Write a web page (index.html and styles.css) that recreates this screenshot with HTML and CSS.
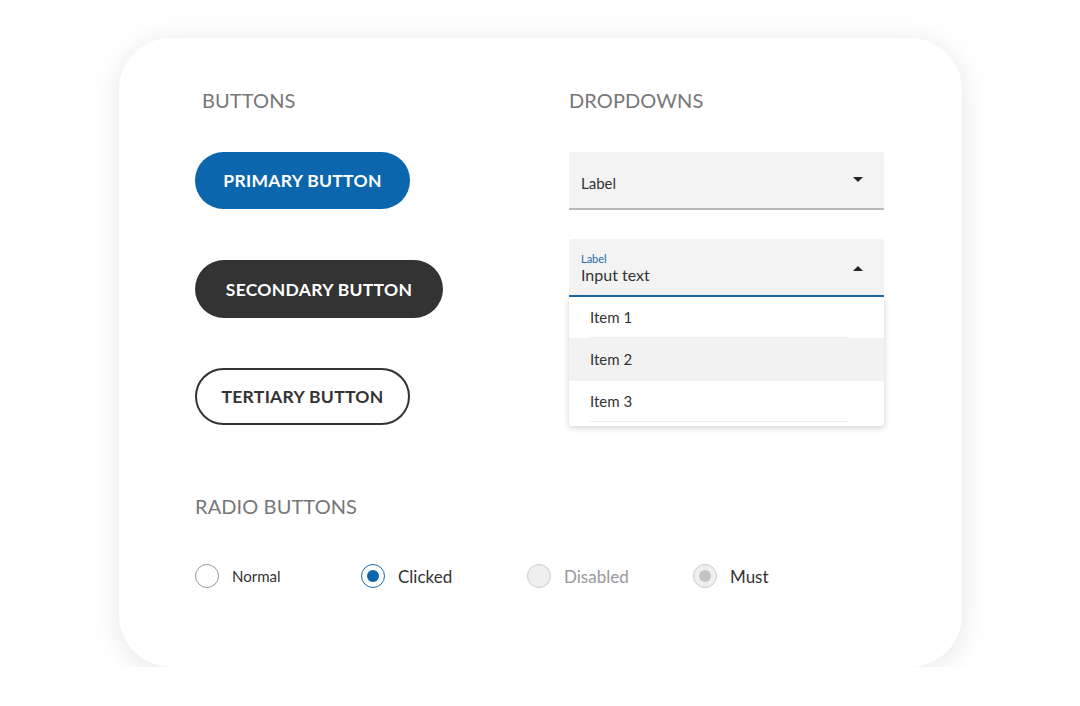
FILE: index.html
```html
<!DOCTYPE html>
<html>
<head>
    <meta charset="UTF-8">
    <title>UI Components</title>
    <link rel="stylesheet" href="styles.css">
</head>
<body>
    <div class="card">
        <div class="top-row">
            <div class="col col-buttons">
                <h2 class="section-title title-buttons">BUTTONS</h2>
                <button class="btn btn-primary">PRIMARY BUTTON</button>
                <button class="btn btn-secondary">SECONDARY BUTTON</button>
                <button class="btn btn-tertiary">TERTIARY BUTTON</button>
            </div>

            <div class="col col-dropdowns">
                <h2 class="section-title">DROPDOWNS</h2>

                <div class="select">
                    <span class="select-value">Label</span>
                    <span class="caret caret-down"></span>
                </div>

                <div class="select select-open">
                    <div class="select-text">
                        <span class="select-label">Label</span>
                        <span class="select-value">Input text</span>
                    </div>
                    <span class="caret caret-up"></span>
                </div>
                <ul class="menu">
                    <li class="menu-item">Item 1</li>
                    <li class="menu-item active">Item 2</li>
                    <li class="menu-item">Item 3</li>
                </ul>
            </div>
        </div>

        <h2 class="section-title title-radios">RADIO BUTTONS</h2>
        <div class="radio-row">
            <label class="radio radio-normal">
                <span class="radio-circle"></span>
                <span class="radio-text">Normal</span>
            </label>
            <label class="radio radio-checked">
                <span class="radio-circle"></span>
                <span class="radio-text">Clicked</span>
            </label>
            <label class="radio radio-disabled">
                <span class="radio-circle"></span>
                <span class="radio-text">Disabled</span>
            </label>
            <label class="radio radio-must">
                <span class="radio-circle"></span>
                <span class="radio-text">Must</span>
            </label>
        </div>
    </div>
</body>
</html>
```

FILE: styles.css
```css
body {
    margin: 0;
    background-color: #fff;
    font-family: Lato, "Open Sans", sans-serif;
    color: #333;
}
.card {
    width: 843px;
    height: 629px;
    box-sizing: border-box;
    margin: 38px 0 0 119px;
    padding: 50px 0 0 76px;
    background-color: #fff;
    border-radius: 52px;
    box-shadow: 0 4px 30px rgba(0,0,0,0.1);
}
.top-row {
    display: flex;
}
.col {
    display: flex;
    flex-direction: column;
    align-items: flex-start;
}
.col-buttons {
    width: 374px;
}
.col-dropdowns {
    width: 315px;
}
.section-title {
    margin: 0;
    font-size: 20px;
    line-height: 24px;
    font-weight: 400;
    color: #777;
    letter-spacing: 0.1px;
}
.title-buttons {
    padding-left: 7px;
}

/* buttons */
.btn {
    font-family: Lato, sans-serif;
    font-size: 17.5px;
    font-weight: 700;
    letter-spacing: 0.3px;
    height: 57px;
    border-radius: 29px;
    border: none;
    padding: 0;
    box-sizing: border-box;
    cursor: pointer;
}
.btn-primary {
    margin-top: 40px;
    width: 215px;
    background-color: #0b66ad;
    color: #fff;
}
.btn-secondary {
    margin-top: 51px;
    width: 248px;
    height: 58px;
    background-color: #333;
    color: #fff;
}
.btn-tertiary {
    margin-top: 50px;
    width: 215px;
    background-color: #fff;
    color: #333;
    border: 2px solid #333;
}

/* dropdowns */
.select {
    width: 315px;
    height: 58px;
    box-sizing: border-box;
    background-color: #f3f3f3;
    border-radius: 3px 3px 0 0;
    border-bottom: 2px solid #b9b9b9;
    display: flex;
    align-items: center;
    justify-content: space-between;
    padding: 6px 21px 0 12px;
    margin-top: 40px;
}
.select-value {
    font-size: 15px;
    color: #333;
}
.select-open {
    margin-top: 29px;
    border-bottom-color: #1b6aab;
    padding-top: 0;
}
.select-text {
    display: flex;
    flex-direction: column;
    padding-top: 2px;
}
.select-label {
    font-size: 11px;
    line-height: 13px;
    color: #1b6aab;
}
.select-open .select-value {
    font-size: 16px;
    line-height: 20px;
}
.caret {
    width: 0;
    height: 0;
    border-left: 5px solid transparent;
    border-right: 5px solid transparent;
}
.caret-down {
    border-top: 5px solid #222;
    margin-top: -8px;
}
.caret-up {
    border-bottom: 5px solid #222;
    margin-top: 2px;
}
.menu {
    list-style: none;
    margin: 0;
    padding: 0 0 4px;
    width: 315px;
    background-color: #fff;
    border-radius: 0 0 3px 3px;
    box-shadow: 0 2px 6px rgba(0,0,0,0.18);
}
.menu-item {
    height: 41px;
    line-height: 41px;
    padding-left: 21px;
    font-size: 15px;
    color: #333;
    position: relative;
}
.menu-item.active {
    height: 43px;
    line-height: 43px;
    background-color: #f2f2f2;
}
.menu-item:first-child::after,
.menu-item:last-child::after {
    content: "";
    position: absolute;
    left: 21px;
    right: 36px;
    bottom: 0;
    border-bottom: 1px solid #eee;
}

/* radios */
.title-radios {
    margin-top: 68px;
}
.radio-row {
    display: flex;
    margin-top: 46px;
}
.radio {
    width: 166px;
    display: flex;
    align-items: center;
    gap: 13px;
}
.radio-circle {
    width: 24px;
    height: 24px;
    box-sizing: border-box;
    border-radius: 50%;
    border: 1px solid #999;
    background-color: #fff;
    position: relative;
}
.radio-text {
    font-size: 17px;
    color: #333;
}
.radio-normal .radio-text {
    font-size: 15px;
}
.radio-checked .radio-circle {
    border-color: #1b6aab;
}
.radio-checked .radio-circle::after,
.radio-must .radio-circle::after {
    content: "";
    position: absolute;
    left: 5px;
    top: 5px;
    width: 12px;
    height: 12px;
    border-radius: 50%;
    background-color: #0b66ad;
}
.radio-disabled .radio-circle,
.radio-must .radio-circle {
    background-color: #efefef;
    border-color: #ccc;
}
.radio-disabled .radio-text {
    color: #999;
}
.radio-must .radio-circle::after {
    background-color: #c4c4c4;
}
```
